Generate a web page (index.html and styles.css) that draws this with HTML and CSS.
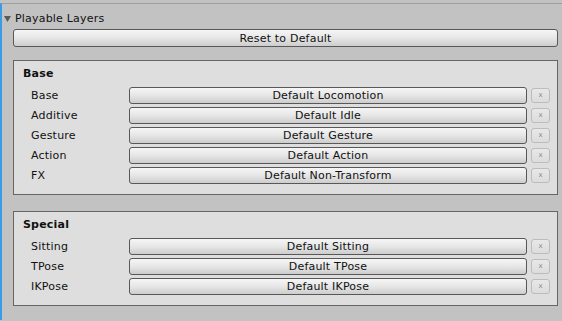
FILE: index.html
```html
<!DOCTYPE html>
<html lang="en">

<head>
    <meta charset="UTF-8">
    <title>Playable Layers</title>
    <link rel="stylesheet" href="styles.css">
</head>

<body>
    <div class="inspector">
        <!-- Foldout header -->
        <div class="foldout">
            <svg class="arrow" width="7" height="6" viewBox="0 0 7 6">
                <polygon points="0,0 7,0 3.5,6" fill="#5a5a5a" />
            </svg>
            <span>Playable Layers</span>
        </div>

        <button class="btn reset">Reset to Default</button>

        <!-- Base layers -->
        <div class="box">
            <div class="box-title">Base</div>
            <div class="row">
                <span class="label">Base</span>
                <button class="btn layer">Default Locomotion</button>
                <button class="clear">x</button>
            </div>
            <div class="row">
                <span class="label">Additive</span>
                <button class="btn layer">Default Idle</button>
                <button class="clear">x</button>
            </div>
            <div class="row">
                <span class="label">Gesture</span>
                <button class="btn layer">Default Gesture</button>
                <button class="clear">x</button>
            </div>
            <div class="row">
                <span class="label">Action</span>
                <button class="btn layer">Default Action</button>
                <button class="clear">x</button>
            </div>
            <div class="row">
                <span class="label">FX</span>
                <button class="btn layer">Default Non-Transform</button>
                <button class="clear">x</button>
            </div>
        </div>

        <!-- Special layers -->
        <div class="box special">
            <div class="box-title">Special</div>
            <div class="row">
                <span class="label">Sitting</span>
                <button class="btn layer">Default Sitting</button>
                <button class="clear">x</button>
            </div>
            <div class="row">
                <span class="label">TPose</span>
                <button class="btn layer">Default TPose</button>
                <button class="clear">x</button>
            </div>
            <div class="row">
                <span class="label">IKPose</span>
                <button class="btn layer">Default IKPose</button>
                <button class="clear">x</button>
            </div>
        </div>
    </div>
</body>

</html>
```

FILE: styles.css
```css
/* General Styles */
body {
    margin: 0;
    padding-top: 3px;
    background-color: #c2c2c2;
    font-family: "DejaVu Sans", sans-serif;
    font-size: 11px;
    letter-spacing: 0.2px;
    color: #111;
}

.inspector {
    height: 317px;
    border-top: 1px solid #9e9e9e;
    border-left: 2px solid #3b9be6;
    padding-right: 4px;
    box-sizing: border-box;
}

/* Foldout header */
.foldout {
    display: flex;
    align-items: center;
    height: 20px;
    margin-top: 4px;
    padding-left: 2px;
}

.foldout .arrow {
    margin-right: 4px;
    margin-top: 1px;
}

/* Buttons */
.btn {
    font-family: "DejaVu Sans", sans-serif;
    font-size: 11px;
    letter-spacing: 0.2px;
    color: #111;
    height: 18px;
    padding: 0;
    border: 1px solid #585858;
    border-radius: 3px;
    background: linear-gradient(#f6f6f6, #e6e6e6 50%, #cdcdcd);
    box-sizing: border-box;
}

.reset {
    display: block;
    width: 545px;
    margin: 1px 0 0 11px;
}

/* Layer boxes */
.box {
    margin: 13px 0 0 11px;
    width: 545px;
    box-sizing: border-box;
    border: 1px solid #666;
    background-color: #dedede;
    padding: 3px 0 10px 0;
}

.box.special {
    margin-top: 16px;
}

.box-title {
    height: 20px;
    line-height: 20px;
    padding-left: 9px;
    font-weight: bold;
    margin-bottom: 3px;
}

.row {
    display: flex;
    align-items: center;
    height: 17px;
    margin-bottom: 3px;
}

.row:last-child {
    margin-bottom: 0;
}

.label {
    width: 98px;
    padding-left: 17px;
}

.layer {
    width: 398px;
    height: 17px;
}

.clear {
    width: 19px;
    height: 15px;
    margin-left: 4px;
    margin-top: -1px;
    padding: 0;
    border: 1px solid #bcbcbc;
    border-radius: 3px;
    background: linear-gradient(#e8e8e8, #dcdcdc);
    color: #8a8a8a;
    font-family: "DejaVu Sans", sans-serif;
    font-size: 7px;
    line-height: 12px;
}
```
